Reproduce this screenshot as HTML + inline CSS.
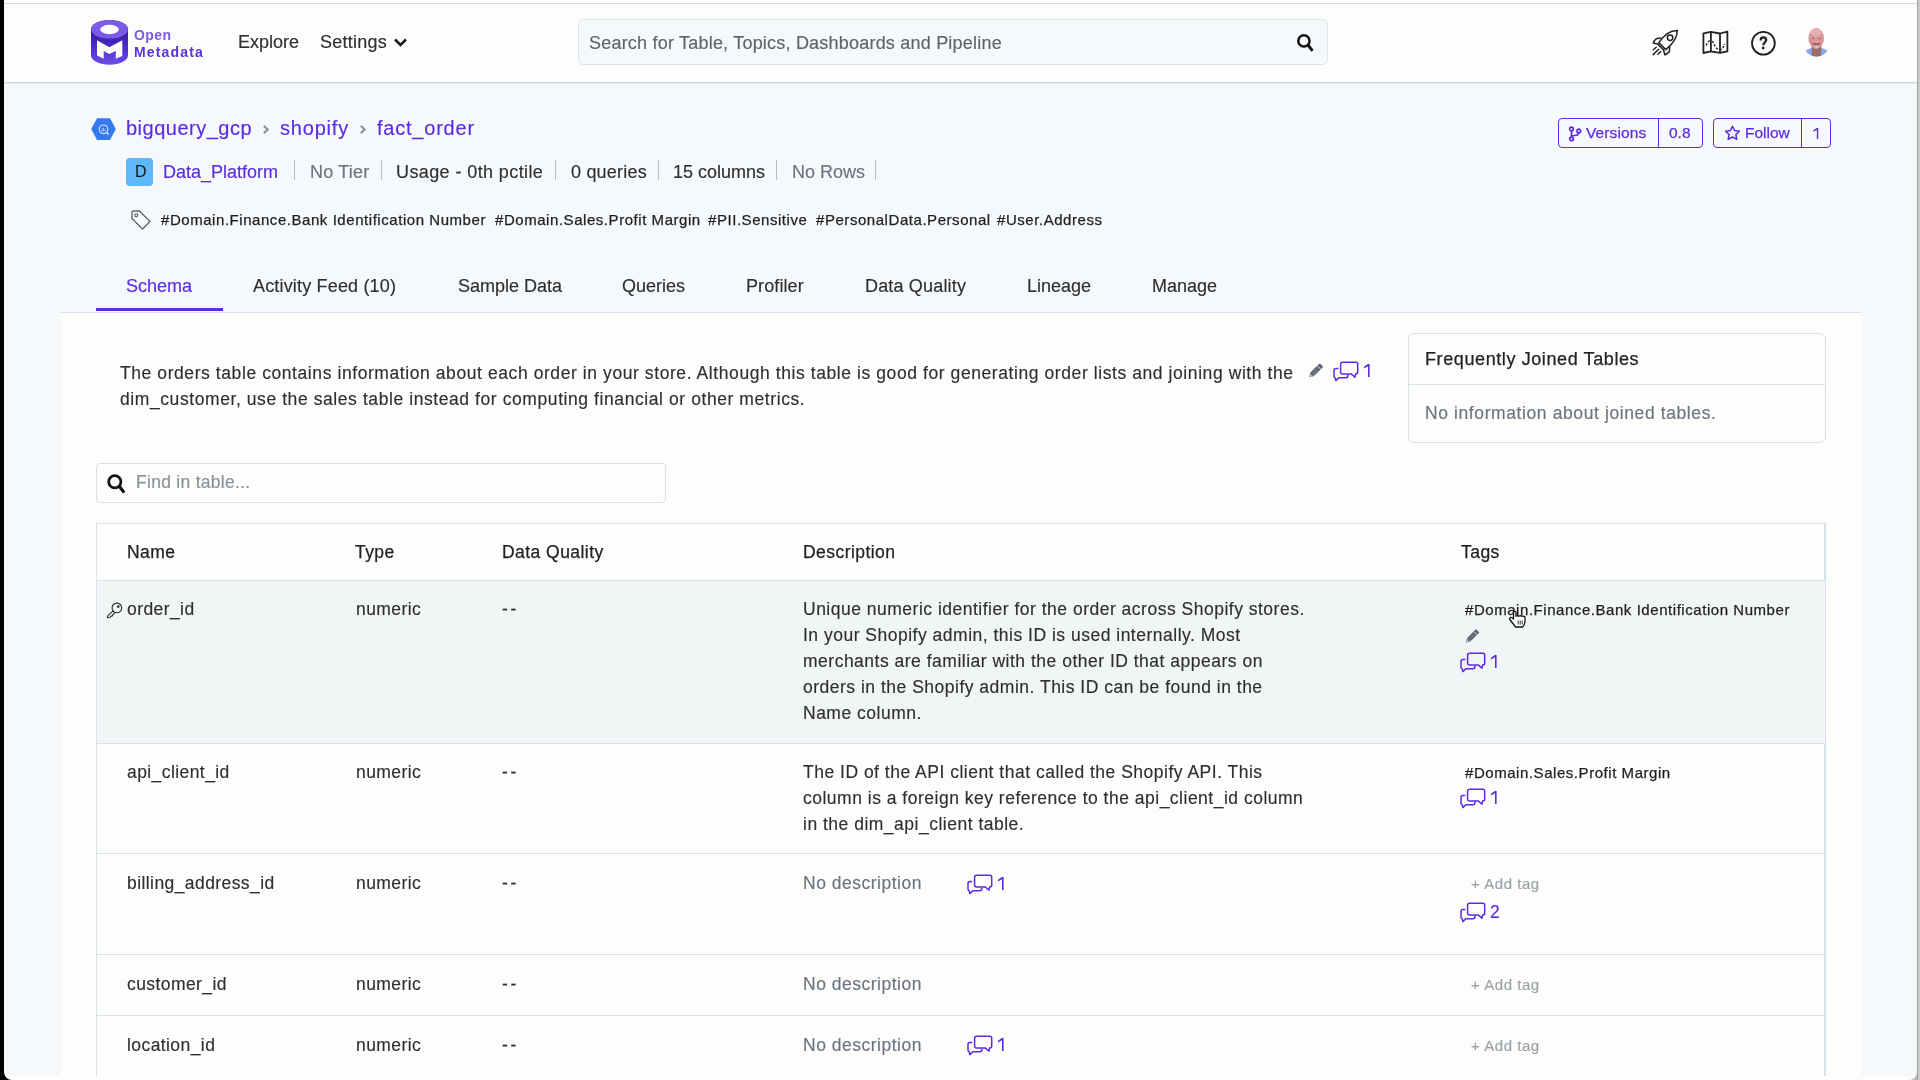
<!DOCTYPE html>
<html><head><meta charset="utf-8">
<style>
*{box-sizing:border-box;margin:0;padding:0}
html,body{width:1920px;height:1080px;overflow:hidden;background:#f6f9fc;font-family:"Liberation Sans",sans-serif;color:#2e2e2e}
.a{position:absolute;white-space:nowrap;will-change:transform}
div.a{-webkit-text-stroke:0.15px currentColor}
</style></head><body>
<div class="a" style="left:0px;top:0px;width:1917px;height:83px;background:#fdfdfc;border-bottom:1px solid #d0d5dc"></div>
<div class="a" style="left:0px;top:83px;width:1917px;height:1px;background:#e6eaef"></div>
<div class="a" style="left:0px;top:3px;width:1917px;height:1px;background:#dadade"></div>
<svg class="a" style="left:91px;top:20px;" width="37" height="45" viewBox="0 0 37 45"><defs><linearGradient id="lg" x1="0" y1="0" x2="0" y2="1"><stop offset="0.25" stop-color="#3a1aa6"/><stop offset="0.5" stop-color="#4526bd"/><stop offset="0.75" stop-color="#5a3ad8"/><stop offset="1" stop-color="#6e50e4"/></linearGradient></defs><path d="M0 9.2 A18.5 9.2 0 0 1 37 9.2 V35.6 A18.5 9.2 0 0 1 0 35.6 Z" fill="url(#lg)"/><ellipse cx="18.5" cy="9.3" rx="18.5" ry="9.3" fill="#7b5be6"/><ellipse cx="18.5" cy="9.5" rx="9.25" ry="4.7" fill="#fdfdfc"/><path d="M6 20.2 L18.3 27.2 L31.3 20.2 L31.3 36 L24.8 38.7 L24.8 30.9 L18.3 34.1 L12.7 30.9 L12.7 38.7 L6 35.5 Z" fill="#fdfdfc"/></svg>
<div class="a" style="left:133.5px;top:25.65px;font-size:14px;line-height:18px;color:#7b5be6;font-weight:700;letter-spacing:0.45px;-webkit-text-stroke:0">Open</div>
<div class="a" style="left:133.5px;top:43.15px;font-size:14px;line-height:18px;color:#5a33d8;font-weight:700;letter-spacing:1.15px;-webkit-text-stroke:0">Metadata</div>
<div class="a" style="left:238px;top:30.76px;font-size:18px;line-height:22px;color:#2e2e2e;">Explore</div>
<div class="a" style="left:320px;top:30.76px;font-size:18px;line-height:22px;color:#2e2e2e;letter-spacing:0.25px;">Settings</div>
<svg class="a" style="left:393px;top:37px;" width="15" height="11" viewBox="0 0 15 11"><path d="M2 2.5 L7.5 8 L13 2.5" stroke="#1e1e1e" stroke-width="2.6" fill="none"/></svg>
<div class="a" style="left:578px;top:19px;width:750px;height:46px;background:#f6f9fc;border:1px solid #dce3eb;border-radius:5px"></div>
<div class="a" style="left:589px;top:32.06px;font-size:18px;line-height:22px;color:#5f6368;letter-spacing:0.21px;">Search for Table, Topics, Dashboards and Pipeline</div>
<svg class="a" style="left:1294px;top:31px;" width="22" height="22" viewBox="0 0 22 22"><circle cx="9.9" cy="9.9" r="5.6" stroke="#111" stroke-width="2.5" fill="none"/><path d="M14 14 L18.5 19.8" stroke="#111" stroke-width="2.9"/></svg>
<svg class="a" style="left:1650px;top:28px;" width="30" height="30" viewBox="0 0 30 30"><g fill="none" stroke="#222" stroke-width="1.5" stroke-linejoin="round" stroke-linecap="round"><path d="M8.8 14.6 L15.8 21.6 C21.5 17 27.5 11 27.3 2.5 C19 2.3 13 8.5 8.8 14.6 Z"/><path d="M10.6 10 L6.2 10.8 C4.8 12 3.6 13.6 3.3 15 L8.4 16.2"/><path d="M19.6 19.2 L19.4 23.6 C18 25 16 26.5 14.8 26.8 L13.6 22"/><path d="M8.2 16.6 L13.5 21.8"/><circle cx="20.1" cy="9.7" r="2.7"/><path d="M3.4 21.7 L6.2 19.3 M3.2 26.6 L8.6 21.2 M7.9 26.3 L10.7 23.5"/></g></svg>
<svg class="a" style="left:1700px;top:28px;" width="30" height="28" viewBox="0 0 30 28"><g fill="none" stroke="#222" stroke-width="1.8" stroke-linejoin="round"><path d="M3.4 5.3 L10.8 3.8 L20 5.5 L27.4 3.6 L27.4 23.3 L20 24.9 L10.8 23.3 L3.4 25 Z"/><path d="M10.9 4 V23.3 M20 5.5 V24.9"/></g><path d="M6.3 17.5 C7 15 8.5 13 10.3 12.3 M12.5 13 C13.5 15.5 15 18.5 16.8 20.3 C18 21.5 19.5 22 21.5 21 C23 20 24 18.5 24.5 16" fill="none" stroke="#222" stroke-width="1.4" stroke-dasharray="2.2 1.6"/></svg>
<svg class="a" style="left:1749px;top:29px;" width="29" height="29" viewBox="0 0 29 29"><circle cx="14.4" cy="14.2" r="11.4" stroke="#1e1e1e" stroke-width="1.8" fill="none"/><path d="M11.6 11.6 C11.6 9.4 12.8 8.4 14.4 8.4 C16.1 8.4 17.2 9.5 17.2 11 C17.2 13.2 14.4 13.5 14.4 16.2" stroke="#1e1e1e" stroke-width="2.2" fill="none"/><circle cx="14.2" cy="19" r="1.4" fill="#1e1e1e"/></svg>
<svg class="a" style="left:1803px;top:26px;" width="27" height="32" viewBox="0 0 27 32"><defs><clipPath id="av"><circle cx="13.5" cy="17" r="13.5"/></clipPath></defs><g clip-path="url(#av)"><path d="M0 32 L0 27 C3 23.5 7 22 10 22 L17 22 C20 22 24 23.5 27 27 L27 32Z" fill="#88a9ee"/><path d="M8.5 19 L18.5 19 L18 32 L9 32Z" fill="#9c6c6c"/></g><ellipse cx="13.2" cy="12.5" rx="7.8" ry="10.4" fill="#d8979a"/><ellipse cx="13.2" cy="6.5" rx="5.5" ry="4" fill="#e4b0b2"/><path d="M9.5 17.2 C11 18.6 15.5 18.6 17 17.2" stroke="#8c4c50" stroke-width="1.4" fill="none"/><ellipse cx="13.6" cy="21" rx="2" ry="1.6" fill="#c4c2c0"/><path d="M8.8 12.5 L11.2 12.5 M15.2 12.5 L17.6 12.5" stroke="#9a5c60" stroke-width="1.1"/></svg>
<svg class="a" style="left:91px;top:118px;" width="25" height="23" viewBox="0 0 25 23"><path d="M6 0.3 L19 0.3 L24.8 11 L19 22 L6 22 L0.2 11Z" fill="#3479ee"/><circle cx="12.5" cy="11.3" r="4.3" stroke="#dbe6fb" stroke-width="1.1" fill="none"/><path d="M15.5 14.3 L17.6 16.4" stroke="#dbe6fb" stroke-width="1.4"/><path d="M11 10.5 L11 13.5 M12.6 9.5 L12.6 13.5 M14.1 11.5 L14.1 13.5" stroke="#c8d8f8" stroke-width="0.8"/></svg>
<div class="a" style="left:126px;top:115.57px;font-size:20px;line-height:25px;color:#5a2be0;letter-spacing:0.5px;">bigquery_gcp</div>
<svg class="a" style="left:262px;top:124px;" width="8" height="11" viewBox="0 0 8 11"><path d="M1.8 1.8 L5.6 5.5 L1.8 9.2" stroke="#8b929c" stroke-width="2.2" fill="none"/></svg>
<div class="a" style="left:280px;top:115.57px;font-size:20px;line-height:25px;color:#5a2be0;letter-spacing:0.8px;">shopify</div>
<svg class="a" style="left:359px;top:124px;" width="8" height="11" viewBox="0 0 8 11"><path d="M1.8 1.8 L5.6 5.5 L1.8 9.2" stroke="#8b929c" stroke-width="2.2" fill="none"/></svg>
<div class="a" style="left:377px;top:115.57px;font-size:20px;line-height:25px;color:#5a2be0;letter-spacing:0.78px;">fact_order</div>
<div class="a" style="left:126px;top:158px;width:27px;height:28px;background:#5db8fc;border-radius:4px"></div>
<div class="a" style="left:134.5px;top:162.46px;font-size:16px;line-height:20px;color:#111;-webkit-text-stroke:0">D</div>
<div class="a" style="left:163px;top:160.76px;font-size:18px;line-height:22px;color:#5a2be0;">Data_Platform</div>
<div class="a" style="left:294px;top:160px;width:1px;height:20px;background:#b8bdc5"></div>
<div class="a" style="left:310px;top:160.76px;font-size:18px;line-height:22px;color:#6b7280;letter-spacing:0.2px;">No Tier</div>
<div class="a" style="left:381px;top:160px;width:1px;height:20px;background:#b8bdc5"></div>
<div class="a" style="left:396px;top:160.76px;font-size:18px;line-height:22px;color:#2e2e2e;letter-spacing:0.4px;">Usage - 0th pctile</div>
<div class="a" style="left:555px;top:160px;width:1px;height:20px;background:#b8bdc5"></div>
<div class="a" style="left:571px;top:160.76px;font-size:18px;line-height:22px;color:#2e2e2e;letter-spacing:0.2px;">0 queries</div>
<div class="a" style="left:658px;top:160px;width:1px;height:20px;background:#b8bdc5"></div>
<div class="a" style="left:673px;top:160.76px;font-size:18px;line-height:22px;color:#2e2e2e;">15 columns</div>
<div class="a" style="left:776px;top:160px;width:1px;height:20px;background:#b8bdc5"></div>
<div class="a" style="left:792px;top:160.76px;font-size:18px;line-height:22px;color:#6b7280;">No Rows</div>
<div class="a" style="left:875px;top:160px;width:1px;height:20px;background:#b8bdc5"></div>
<svg class="a" style="left:130px;top:209px;" width="22" height="22" viewBox="0 0 22 22"><path d="M2 3.5 Q2 2 3.5 2 L9.5 2 L20 12.5 L12.5 20 L2 9.5 Z" stroke="#606570" stroke-width="1.4" fill="none" stroke-linejoin="round"/><circle cx="6.3" cy="6.3" r="1.5" stroke="#606570" stroke-width="1.2" fill="none"/></svg>
<div class="a" style="left:161px;top:210.30px;font-size:15px;line-height:19px;color:#1f1f1f;letter-spacing:0.55px;-webkit-text-stroke:0.25px currentColor;">#Domain.Finance.Bank Identification Number</div>
<div class="a" style="left:495px;top:210.30px;font-size:15px;line-height:19px;color:#1f1f1f;letter-spacing:0.55px;-webkit-text-stroke:0.25px currentColor;">#Domain.Sales.Profit Margin</div>
<div class="a" style="left:708px;top:210.30px;font-size:15px;line-height:19px;color:#1f1f1f;letter-spacing:0.55px;-webkit-text-stroke:0.25px currentColor;">#PII.Sensitive</div>
<div class="a" style="left:816px;top:210.30px;font-size:15px;line-height:19px;color:#1f1f1f;letter-spacing:0.55px;-webkit-text-stroke:0.25px currentColor;">#PersonalData.Personal</div>
<div class="a" style="left:997px;top:210.30px;font-size:15px;line-height:19px;color:#1f1f1f;letter-spacing:0.55px;-webkit-text-stroke:0.25px currentColor;">#User.Address</div>
<div class="a" style="left:1558px;top:118px;width:145px;height:30px;border:1px solid #5a2be0;border-radius:4px"></div>
<div class="a" style="left:1658px;top:118px;width:1px;height:30px;background:#5a2be0"></div>
<svg class="a" style="left:1568px;top:126.3px;" width="15" height="16" viewBox="0 0 15 16"><g fill="none" stroke="#5a2be0" stroke-width="1.7"><circle cx="3.5" cy="3" r="1.8"/><circle cx="3.5" cy="13" r="1.8"/><circle cx="10.8" cy="5" r="1.8"/><path d="M3.5 4.8 L3.5 11.2 M3.5 10 L9.5 9 L10.6 6.8"/></g></svg>
<div class="a" style="left:1586px;top:123.33px;font-size:15.5px;line-height:19px;color:#5a2be0;letter-spacing:0.1px;-webkit-text-stroke:0.25px currentColor;">Versions</div>
<div class="a" style="left:1669px;top:123.33px;font-size:15.5px;line-height:19px;color:#5a2be0;-webkit-text-stroke:0.25px currentColor;">0.8</div>
<div class="a" style="left:1713px;top:118px;width:118px;height:30px;border:1px solid #5a2be0;border-radius:4px"></div>
<div class="a" style="left:1801px;top:118px;width:1px;height:30px;background:#5a2be0"></div>
<svg class="a" style="left:1724px;top:125px;" width="17" height="16" viewBox="0 0 17 16"><path d="M8.5 1.2 L10.6 5.6 L15.4 6.2 L11.9 9.5 L12.8 14.3 L8.5 12 L4.2 14.3 L5.1 9.5 L1.6 6.2 L6.4 5.6Z" stroke="#5a2be0" stroke-width="1.5" fill="none" stroke-linejoin="round"/></svg>
<div class="a" style="left:1745px;top:123.33px;font-size:15.5px;line-height:19px;color:#5a2be0;-webkit-text-stroke:0.25px currentColor;">Follow</div>
<svg class="a" style="left:1812.5px;top:127.6px;overflow:visible" width="6" height="11.2" viewBox="0 0 6 13"><path d="M0 2.7 L3.9 0 H5.6 V12.9 H4 V2.3 L0 4.5 Z" fill="#5a2be0"/></svg>
<div class="a" style="left:126px;top:275.26px;font-size:18px;line-height:22px;color:#5a2be0;">Schema</div>
<div class="a" style="left:253px;top:275.26px;font-size:18px;line-height:22px;color:#2e2e2e;letter-spacing:0.17px;">Activity Feed (10)</div>
<div class="a" style="left:458px;top:275.26px;font-size:18px;line-height:22px;color:#2e2e2e;">Sample Data</div>
<div class="a" style="left:622px;top:275.26px;font-size:18px;line-height:22px;color:#2e2e2e;">Queries</div>
<div class="a" style="left:746px;top:275.26px;font-size:18px;line-height:22px;color:#2e2e2e;letter-spacing:0.1px;">Profiler</div>
<div class="a" style="left:865px;top:275.26px;font-size:18px;line-height:22px;color:#2e2e2e;letter-spacing:0.17px;">Data Quality</div>
<div class="a" style="left:1027px;top:275.26px;font-size:18px;line-height:22px;color:#2e2e2e;">Lineage</div>
<div class="a" style="left:1152px;top:275.26px;font-size:18px;line-height:22px;color:#2e2e2e;">Manage</div>
<div class="a" style="left:61px;top:312px;width:1800px;height:1px;background:#d6e0ec"></div>
<div class="a" style="left:96px;top:308px;width:127px;height:3px;background:#5a2be0"></div>
<div class="a" style="left:61px;top:313px;width:1800px;height:767px;background:#fdfdfc"></div>
<div class="a" style="left:120px;top:361.94px;font-size:17.5px;line-height:22px;color:#2e2e2e;letter-spacing:0.58px;">The orders table contains information about each order in your store. Although this table is good for generating order lists and joining with the</div>
<div class="a" style="left:120px;top:387.94px;font-size:17.5px;line-height:22px;color:#2e2e2e;letter-spacing:0.58px;">dim_customer, use the sales table instead for computing financial or other metrics.</div>
<svg class="a" style="left:1306px;top:361px;" width="19" height="20" viewBox="0 0 19 20"><g transform="rotate(45 9.5 10)"><rect x="7" y="1.5" width="5" height="13.5" rx="1" fill="#5b6472"/><path d="M7 15 L12 15 L9.5 19 Z" fill="#5b6472"/><path d="M8.2 16 L10.8 16 L9.5 18 Z" fill="#dfe6f0"/><rect x="7" y="4.6" width="5" height="0.8" fill="#d0d5dc"/><rect x="9.2" y="6.5" width="0.7" height="7" fill="#8a929e"/></g></svg>
<svg class="a" style="left:1333px;top:361px;" width="26" height="21" viewBox="0 0 26 21"><g fill="none" stroke="#5a2be0" stroke-width="1.5" stroke-linejoin="round"><path d="M9.6 1.25 H22.7 Q24.7 1.25 24.7 3.25 V11 Q24.7 12.9 23 12.9 L22.6 12.9 L22 16.2 L18.2 12.9 H9.6 Q7.6 12.9 7.6 10.9 V3.25 Q7.6 1.25 9.6 1.25 Z"/><path d="M5.3 7.5 H3 Q1 7.5 1 9.5 V15 Q1 16.7 2.2 16.7 L2.8 19.6 L5.8 16.7 H12.8 Q14.9 16.7 14.9 14.6 V13.4"/></g></svg>
<svg class="a" style="left:1364px;top:364.4px;" width="6" height="13" viewBox="0 0 6 13"><path d="M0 2.7 L3.9 0 H5.6 V12.9 H4 V2.3 L0 4.5 Z" fill="#5a2be0"/></svg>
<div class="a" style="left:1408px;top:333px;width:418px;height:110px;border:1px solid #d6e1ea;border-radius:6px;background:#fdfdfc"></div>
<div class="a" style="left:1409px;top:384px;width:416px;height:1px;background:#d6e1ea"></div>
<div class="a" style="left:1425px;top:348.26px;font-size:18px;line-height:22px;color:#222;letter-spacing:0.6px;-webkit-text-stroke:0.25px currentColor;">Frequently Joined Tables</div>
<div class="a" style="left:1425px;top:402.44px;font-size:17.5px;line-height:22px;color:#6b7280;letter-spacing:0.6px;">No information about joined tables.</div>
<div class="a" style="left:96px;top:463px;width:570px;height:40px;border:1px solid #d6e1ea;border-radius:4px;background:#fdfdfc"></div>
<svg class="a" style="left:104px;top:471px;" width="24" height="24" viewBox="0 0 22 22"><circle cx="9.9" cy="9.9" r="5.6" stroke="#111" stroke-width="2.5" fill="none"/><path d="M14 14 L18.5 19.8" stroke="#111" stroke-width="2.9"/></svg>
<div class="a" style="left:136px;top:471.24px;font-size:17.5px;line-height:22px;color:#8a9099;letter-spacing:0.28px;">Find in table...</div>
<div class="a" style="left:96px;top:523px;width:1730px;height:560px;border:1px solid #d6e1ea;border-right-width:2px;background:#fdfdfc"></div>
<div class="a" style="left:97px;top:580px;width:1728px;height:1px;background:#d6e1ea"></div>
<div class="a" style="left:97px;top:581px;width:1728px;height:162px;background:#f2f5f5"></div>
<div class="a" style="left:97px;top:743px;width:1728px;height:1px;background:#d6e1ea"></div>
<div class="a" style="left:97px;top:853px;width:1728px;height:1px;background:#d6e1ea"></div>
<div class="a" style="left:97px;top:954px;width:1728px;height:1px;background:#d6e1ea"></div>
<div class="a" style="left:97px;top:1015px;width:1728px;height:1px;background:#d6e1ea"></div>
<div class="a" style="left:127px;top:540.74px;font-size:17.5px;line-height:22px;color:#222;letter-spacing:0.45px;-webkit-text-stroke:0.25px currentColor;">Name</div>
<div class="a" style="left:355px;top:540.74px;font-size:17.5px;line-height:22px;color:#222;letter-spacing:0.45px;-webkit-text-stroke:0.25px currentColor;">Type</div>
<div class="a" style="left:502px;top:540.74px;font-size:17.5px;line-height:22px;color:#222;letter-spacing:0.45px;-webkit-text-stroke:0.25px currentColor;">Data Quality</div>
<div class="a" style="left:803px;top:540.74px;font-size:17.5px;line-height:22px;color:#222;letter-spacing:0.45px;-webkit-text-stroke:0.25px currentColor;">Description</div>
<div class="a" style="left:1461px;top:540.74px;font-size:17.5px;line-height:22px;color:#222;letter-spacing:0.45px;-webkit-text-stroke:0.25px currentColor;">Tags</div>
<div class="a" style="left:127px;top:597.94px;font-size:17.5px;line-height:22px;color:#2e2e2e;letter-spacing:0.42px;">order_id</div>
<div class="a" style="left:356px;top:597.94px;font-size:17.5px;line-height:22px;color:#2e2e2e;letter-spacing:0.42px;">numeric</div>
<div class="a" style="left:502px;top:597.94px;font-size:17.5px;line-height:22px;color:#2e2e2e;letter-spacing:2.6px;">--</div>
<div class="a" style="left:803px;top:597.94px;font-size:17.5px;line-height:22px;color:#2e2e2e;letter-spacing:0.5px;">Unique numeric identifier for the order across Shopify stores.</div>
<div class="a" style="left:803px;top:624.04px;font-size:17.5px;line-height:22px;color:#2e2e2e;letter-spacing:0.5px;">In your Shopify admin, this ID is used internally. Most</div>
<div class="a" style="left:803px;top:650.14px;font-size:17.5px;line-height:22px;color:#2e2e2e;letter-spacing:0.5px;">merchants are familiar with the other ID that appears on</div>
<div class="a" style="left:803px;top:676.24px;font-size:17.5px;line-height:22px;color:#2e2e2e;letter-spacing:0.5px;">orders in the Shopify admin. This ID can be found in the</div>
<div class="a" style="left:803px;top:702.34px;font-size:17.5px;line-height:22px;color:#2e2e2e;letter-spacing:0.5px;">Name column.</div>
<svg class="a" style="left:105px;top:601px;" width="18" height="18" viewBox="0 0 18 18"><g fill="none" stroke="#2a2a2a" stroke-width="1.1" stroke-linejoin="round"><circle cx="11.9" cy="6.9" r="4.8"/><circle cx="13.2" cy="5.6" r="0.9"/><path d="M8.4 9.6 L3 14.6 L2.2 16.8 L5 16.5 L6 15.1 L7.3 15 L7.8 13.6 L10 11.6"/></g></svg>
<div class="a" style="left:1465px;top:600.30px;font-size:15px;line-height:19px;color:#1f1f1f;letter-spacing:0.55px;-webkit-text-stroke:0.25px currentColor;">#Domain.Finance.Bank Identification Number</div>
<svg class="a" style="left:1462.5px;top:627px;" width="18" height="19" viewBox="0 0 19 20"><g transform="rotate(45 9.5 10)"><rect x="7" y="1.5" width="5" height="13.5" rx="1" fill="#5b6472"/><path d="M7 15 L12 15 L9.5 19 Z" fill="#5b6472"/><path d="M8.2 16 L10.8 16 L9.5 18 Z" fill="#dfe6f0"/><rect x="7" y="4.6" width="5" height="0.8" fill="#d0d5dc"/><rect x="9.2" y="6.5" width="0.7" height="7" fill="#8a929e"/></g></svg>
<svg class="a" style="left:1460px;top:652px;" width="26" height="21" viewBox="0 0 26 21"><g fill="none" stroke="#5a2be0" stroke-width="1.5" stroke-linejoin="round"><path d="M9.6 1.25 H22.7 Q24.7 1.25 24.7 3.25 V11 Q24.7 12.9 23 12.9 L22.6 12.9 L22 16.2 L18.2 12.9 H9.6 Q7.6 12.9 7.6 10.9 V3.25 Q7.6 1.25 9.6 1.25 Z"/><path d="M5.3 7.5 H3 Q1 7.5 1 9.5 V15 Q1 16.7 2.2 16.7 L2.8 19.6 L5.8 16.7 H12.8 Q14.9 16.7 14.9 14.6 V13.4"/></g></svg>
<svg class="a" style="left:1491px;top:655.4px;" width="6" height="13" viewBox="0 0 6 13"><path d="M0 2.7 L3.9 0 H5.6 V12.9 H4 V2.3 L0 4.5 Z" fill="#5a2be0"/></svg>
<div class="a" style="left:127px;top:760.74px;font-size:17.5px;line-height:22px;color:#2e2e2e;letter-spacing:0.42px;">api_client_id</div>
<div class="a" style="left:356px;top:760.74px;font-size:17.5px;line-height:22px;color:#2e2e2e;letter-spacing:0.42px;">numeric</div>
<div class="a" style="left:502px;top:760.74px;font-size:17.5px;line-height:22px;color:#2e2e2e;letter-spacing:2.6px;">--</div>
<div class="a" style="left:803px;top:760.74px;font-size:17.5px;line-height:22px;color:#2e2e2e;letter-spacing:0.5px;">The ID of the API client that called the Shopify API. This</div>
<div class="a" style="left:803px;top:786.84px;font-size:17.5px;line-height:22px;color:#2e2e2e;letter-spacing:0.5px;">column is a foreign key reference to the api_client_id column</div>
<div class="a" style="left:803px;top:812.94px;font-size:17.5px;line-height:22px;color:#2e2e2e;letter-spacing:0.5px;">in the dim_api_client table.</div>
<div class="a" style="left:1465px;top:762.70px;font-size:15px;line-height:19px;color:#1f1f1f;letter-spacing:0.55px;-webkit-text-stroke:0.25px currentColor;">#Domain.Sales.Profit Margin</div>
<svg class="a" style="left:1460px;top:788px;" width="26" height="21" viewBox="0 0 26 21"><g fill="none" stroke="#5a2be0" stroke-width="1.5" stroke-linejoin="round"><path d="M9.6 1.25 H22.7 Q24.7 1.25 24.7 3.25 V11 Q24.7 12.9 23 12.9 L22.6 12.9 L22 16.2 L18.2 12.9 H9.6 Q7.6 12.9 7.6 10.9 V3.25 Q7.6 1.25 9.6 1.25 Z"/><path d="M5.3 7.5 H3 Q1 7.5 1 9.5 V15 Q1 16.7 2.2 16.7 L2.8 19.6 L5.8 16.7 H12.8 Q14.9 16.7 14.9 14.6 V13.4"/></g></svg>
<svg class="a" style="left:1491px;top:791.4px;" width="6" height="13" viewBox="0 0 6 13"><path d="M0 2.7 L3.9 0 H5.6 V12.9 H4 V2.3 L0 4.5 Z" fill="#5a2be0"/></svg>
<div class="a" style="left:127px;top:872.14px;font-size:17.5px;line-height:22px;color:#2e2e2e;letter-spacing:0.42px;">billing_address_id</div>
<div class="a" style="left:356px;top:872.14px;font-size:17.5px;line-height:22px;color:#2e2e2e;letter-spacing:0.42px;">numeric</div>
<div class="a" style="left:502px;top:872.14px;font-size:17.5px;line-height:22px;color:#2e2e2e;letter-spacing:2.6px;">--</div>
<div class="a" style="left:803px;top:872.14px;font-size:17.5px;line-height:22px;color:#6b7280;letter-spacing:0.5px;">No description</div>
<svg class="a" style="left:967px;top:874px;" width="26" height="21" viewBox="0 0 26 21"><g fill="none" stroke="#5a2be0" stroke-width="1.5" stroke-linejoin="round"><path d="M9.6 1.25 H22.7 Q24.7 1.25 24.7 3.25 V11 Q24.7 12.9 23 12.9 L22.6 12.9 L22 16.2 L18.2 12.9 H9.6 Q7.6 12.9 7.6 10.9 V3.25 Q7.6 1.25 9.6 1.25 Z"/><path d="M5.3 7.5 H3 Q1 7.5 1 9.5 V15 Q1 16.7 2.2 16.7 L2.8 19.6 L5.8 16.7 H12.8 Q14.9 16.7 14.9 14.6 V13.4"/></g></svg>
<svg class="a" style="left:998px;top:877.4px;" width="6" height="13" viewBox="0 0 6 13"><path d="M0 2.7 L3.9 0 H5.6 V12.9 H4 V2.3 L0 4.5 Z" fill="#5a2be0"/></svg>
<div class="a" style="left:1471px;top:874.00px;font-size:15px;line-height:19px;color:#9aa0a8;letter-spacing:0.55px;">+ Add tag</div>
<svg class="a" style="left:1460px;top:902px;" width="26" height="21" viewBox="0 0 26 21"><g fill="none" stroke="#5a2be0" stroke-width="1.5" stroke-linejoin="round"><path d="M9.6 1.25 H22.7 Q24.7 1.25 24.7 3.25 V11 Q24.7 12.9 23 12.9 L22.6 12.9 L22 16.2 L18.2 12.9 H9.6 Q7.6 12.9 7.6 10.9 V3.25 Q7.6 1.25 9.6 1.25 Z"/><path d="M5.3 7.5 H3 Q1 7.5 1 9.5 V15 Q1 16.7 2.2 16.7 L2.8 19.6 L5.8 16.7 H12.8 Q14.9 16.7 14.9 14.6 V13.4"/></g></svg>
<div class="a" style="left:1490px;top:901.14px;font-size:17.5px;line-height:22px;color:#5a2be0;">2</div>
<div class="a" style="left:127px;top:973.34px;font-size:17.5px;line-height:22px;color:#2e2e2e;letter-spacing:0.42px;">customer_id</div>
<div class="a" style="left:356px;top:973.34px;font-size:17.5px;line-height:22px;color:#2e2e2e;letter-spacing:0.42px;">numeric</div>
<div class="a" style="left:502px;top:973.34px;font-size:17.5px;line-height:22px;color:#2e2e2e;letter-spacing:2.6px;">--</div>
<div class="a" style="left:803px;top:973.34px;font-size:17.5px;line-height:22px;color:#6b7280;letter-spacing:0.5px;">No description</div>
<div class="a" style="left:1471px;top:974.70px;font-size:15px;line-height:19px;color:#9aa0a8;letter-spacing:0.55px;">+ Add tag</div>
<div class="a" style="left:127px;top:1034.34px;font-size:17.5px;line-height:22px;color:#2e2e2e;letter-spacing:0.42px;">location_id</div>
<div class="a" style="left:356px;top:1034.34px;font-size:17.5px;line-height:22px;color:#2e2e2e;letter-spacing:0.42px;">numeric</div>
<div class="a" style="left:502px;top:1034.34px;font-size:17.5px;line-height:22px;color:#2e2e2e;letter-spacing:2.6px;">--</div>
<div class="a" style="left:803px;top:1034.34px;font-size:17.5px;line-height:22px;color:#6b7280;letter-spacing:0.5px;">No description</div>
<svg class="a" style="left:967px;top:1035px;" width="26" height="21" viewBox="0 0 26 21"><g fill="none" stroke="#5a2be0" stroke-width="1.5" stroke-linejoin="round"><path d="M9.6 1.25 H22.7 Q24.7 1.25 24.7 3.25 V11 Q24.7 12.9 23 12.9 L22.6 12.9 L22 16.2 L18.2 12.9 H9.6 Q7.6 12.9 7.6 10.9 V3.25 Q7.6 1.25 9.6 1.25 Z"/><path d="M5.3 7.5 H3 Q1 7.5 1 9.5 V15 Q1 16.7 2.2 16.7 L2.8 19.6 L5.8 16.7 H12.8 Q14.9 16.7 14.9 14.6 V13.4"/></g></svg>
<svg class="a" style="left:998px;top:1038.4px;" width="6" height="13" viewBox="0 0 6 13"><path d="M0 2.7 L3.9 0 H5.6 V12.9 H4 V2.3 L0 4.5 Z" fill="#5a2be0"/></svg>
<div class="a" style="left:1471px;top:1035.70px;font-size:15px;line-height:19px;color:#9aa0a8;letter-spacing:0.55px;">+ Add tag</div>
<svg class="a" style="left:1508px;top:609px;" width="20" height="20" viewBox="0 0 20 20"><path d="M5.5 10 L5.5 3.8 Q5.5 2.3 6.75 2.3 Q8 2.3 8 3.8 L8 7.2 Q9.5 6.3 11 7.2 Q12.5 6.3 14 7.3 Q15.8 6.6 17 8 L17 13 Q16.5 16 14.7 18 L7.6 18 Q5 14.5 2.2 11 Q0.8 9.2 2.4 8.5 Q3.8 8.2 5.5 10 Z" fill="#fff" stroke="#111" stroke-width="1.3" stroke-linejoin="round"/><path d="M10.2 11.5 V15.5 M12.2 11.5 V15.5 M14.2 11.5 V15.5" stroke="#222" stroke-width="0.9"/></svg>
<div class="a" style="left:0px;top:1076px;width:1917px;height:4px;background:#fdfdfc"></div>
<div class="a" style="left:0px;top:0px;width:4px;height:1080px;background:#000"></div>
<svg class="a" style="left:4px;top:1072px;" width="8" height="8" viewBox="0 0 8 8"><path d="M0 0 A8 8 0 0 0 8 8 L0 8Z" fill="#000"/></svg>
<svg class="a" style="left:1909px;top:1072px;" width="8" height="8" viewBox="0 0 8 8"><path d="M8 0 A8 8 0 0 1 0 8 L8 8Z" fill="#b8baba"/></svg>
<div class="a" style="left:1917px;top:0px;width:3px;height:1080px;background:#c9cbcb;border-left:1px solid #a0a2a0"></div>
</body></html>
